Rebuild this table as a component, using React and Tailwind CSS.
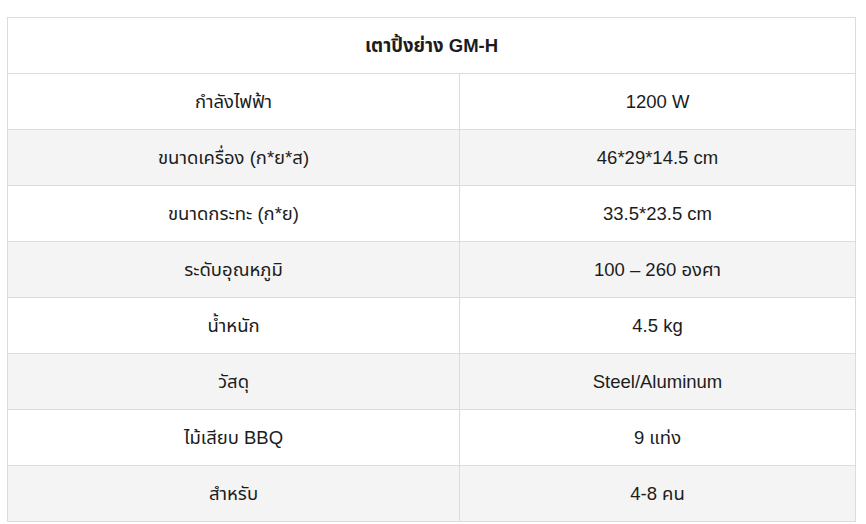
import React from 'react';

const rows = [
  ['กำลังไฟฟ้า', '1200 W'],
  ['ขนาดเครื่อง (ก*ย*ส)', '46*29*14.5 cm'],
  ['ขนาดกระทะ (ก*ย)', '33.5*23.5 cm'],
  ['ระดับอุณหภูมิ', '100 – 260 องศา'],
  ['น้ำหนัก', '4.5 kg'],
  ['วัสดุ', 'Steel/Aluminum'],
  ['ไม้เสียบ BBQ', '9 แท่ง'],
  ['สำหรับ', '4-8 คน'],
];

const App = () => {
  return (
    <div className="w-[866px] h-[524px] bg-white pt-[17px] pl-[7px]" style={{ fontFamily: '"Liberation Sans", Arial, "Noto Sans Thai", sans-serif' }}>
      <table className="w-[848px] border-collapse text-[18.5px] text-[#1c1c1c] table-fixed">
        <colgroup>
          <col className="w-[452px]" />
          <col className="w-[396px]" />
        </colgroup>
        <thead>
          <tr className="h-[56px]">
            <th colSpan={2} className="border border-[#dcdcdc] font-bold text-center align-middle">
              เตาปิ้งย่าง GM-H
            </th>
          </tr>
        </thead>
        <tbody>
          {rows.map(([label, value], i) => (
            <tr key={label} className={i % 2 === 1 ? 'h-[56px] bg-[#f4f4f4]' : 'h-[56px] bg-white'}>
              <td className="border border-[#dcdcdc] text-center align-middle">{label}</td>
              <td className="border border-[#dcdcdc] text-center align-middle">{value}</td>
            </tr>
          ))}
        </tbody>
      </table>
    </div>
  );
};

export default App;
